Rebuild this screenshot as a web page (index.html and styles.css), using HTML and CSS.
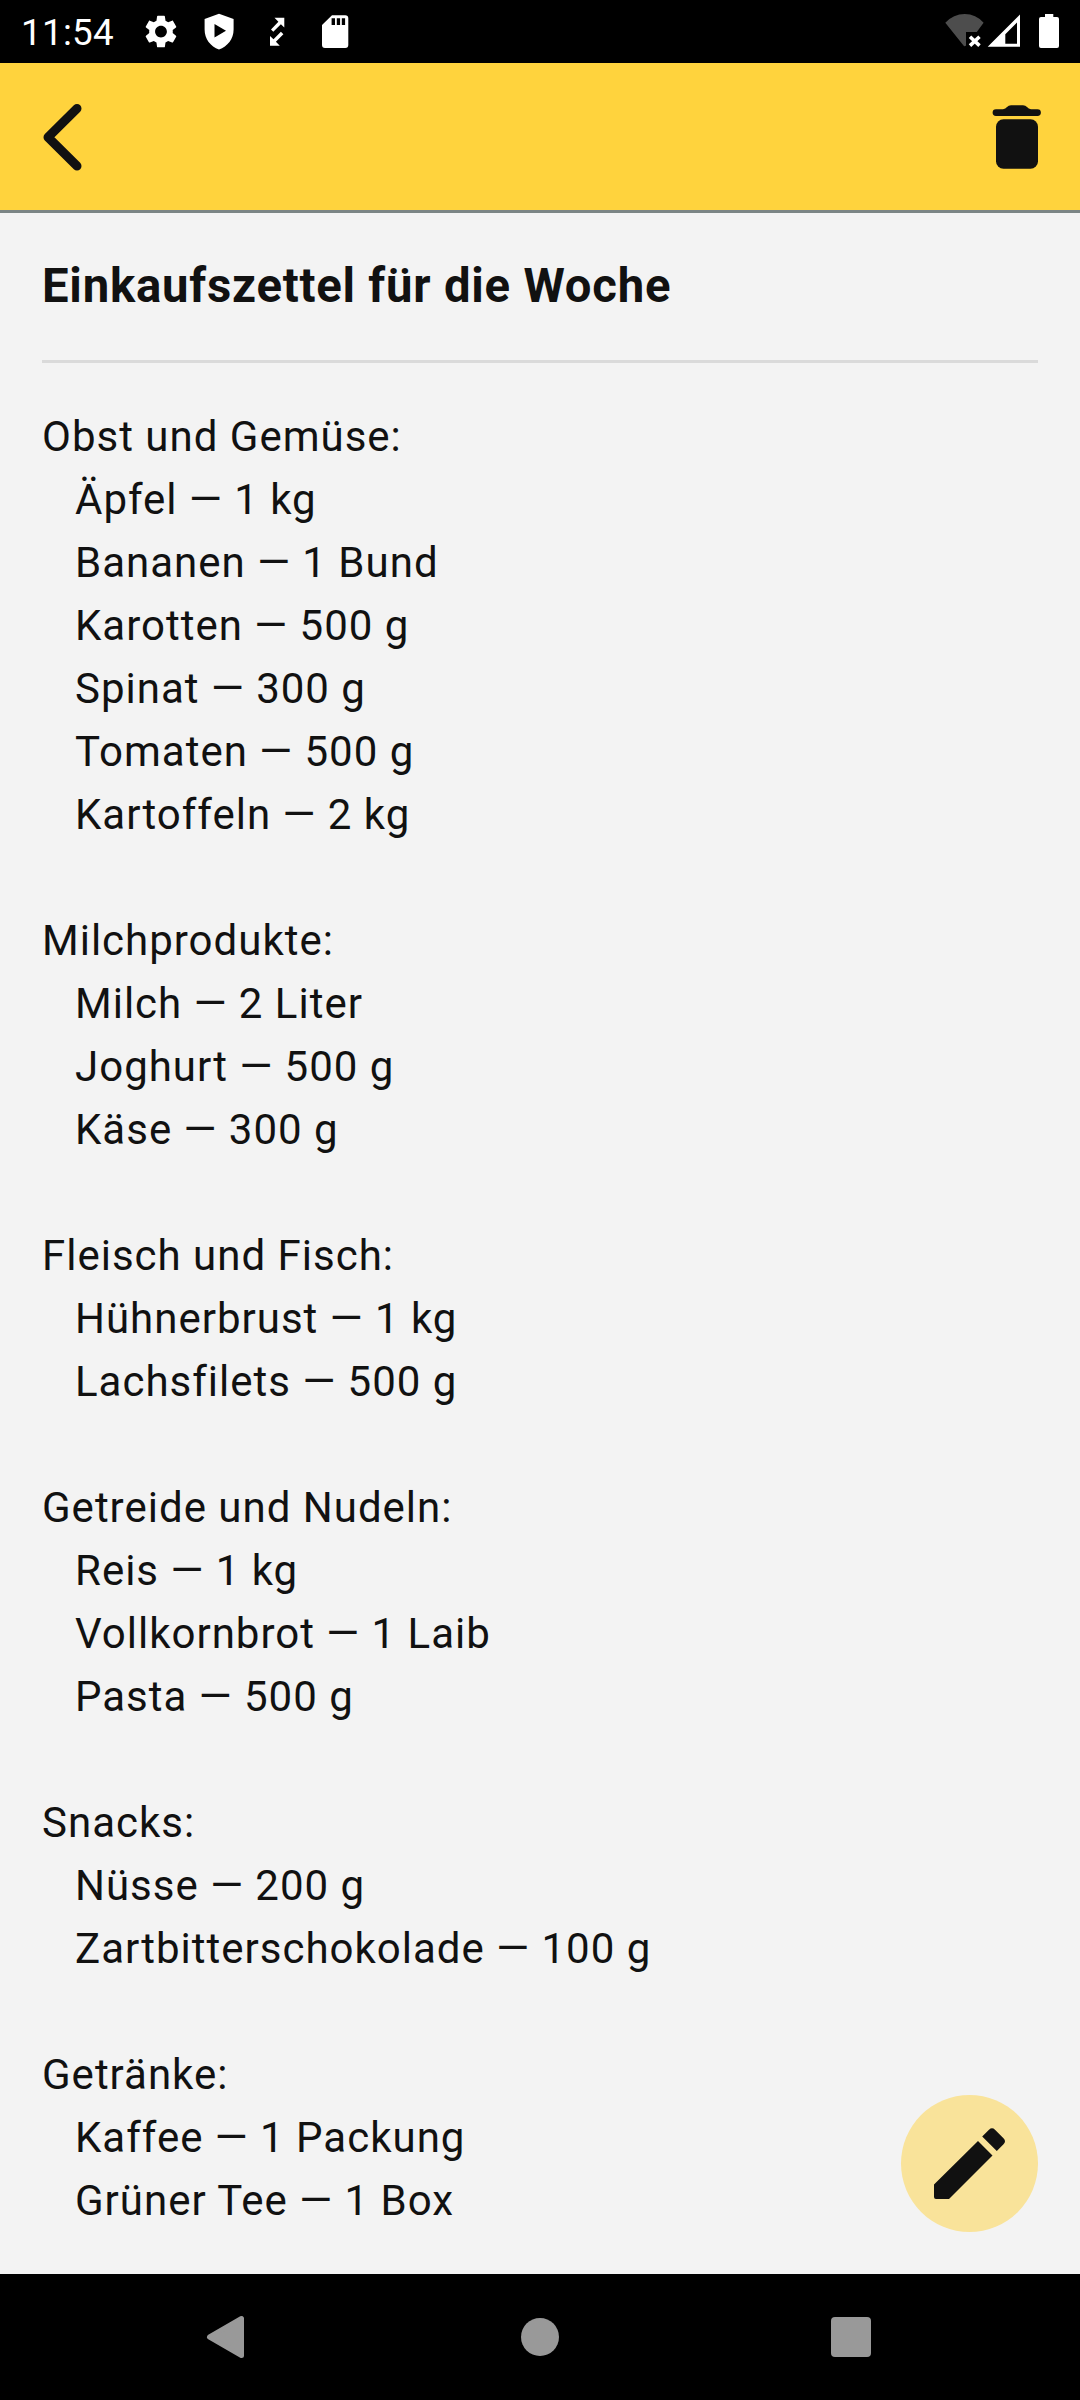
FILE: index.html
```html
<!DOCTYPE html>
<html lang="de">
<head>
<meta charset="utf-8">
<title>Einkaufszettel für die Woche</title>
<link rel="stylesheet" href="styles.css">
</head>
<body>
<div class="screen">
  <div class="status-bar">
    <span class="clock">11:54</span>
    <svg class="status-icons" viewBox="0 0 220 63">
      <g fill="#fff">
        <path transform="translate(11.300 11.900) scale(1.640)" d="M19.140 12.940c.04-.3.06-.61.06-.94 0-.32-.02-.64-.07-.94l2.030-1.580c.18-.14.23-.41.12-.61l-1.920-3.320c-.12-.22-.37-.29-.59-.22l-2.390.96c-.5-.38-1.030-.7-1.620-.94l-.36-2.540c-.04-.24-.24-.41-.48-.41h-3.840c-.24 0-.43.17-.47.41l-.36 2.540c-.59.24-1.130.57-1.620.94l-2.390-.96c-.22-.08-.47 0-.59.22L2.740 8.870c-.12.21-.08.47.12.61l2.030 1.580c-.05.3-.09.63-.09.94s.02.64.07.94l-2.030 1.580c-.18.14-.23.41-.12.61l1.920 3.320c.12.22.37.29.59.22l2.390-.96c.5.38 1.030.7 1.620.94l.36 2.540c.05.24.24.41.48.41h3.840c.24 0 .44-.17.47-.41l.36-2.540c.59-.24 1.130-.56 1.620-.94l2.390.96c.22.08.47 0 .59-.22l1.920-3.320c.12-.22.07-.47-.12-.61l-2.010-1.580zM12 15.600c-1.980 0-3.600-1.620-3.600-3.600s1.620-3.600 3.600-3.600 3.600 1.620 3.600 3.600-1.620 3.600-3.600 3.600z"/>
        <path fill-rule="evenodd" d="M89 13.700 103.600 19V29.500C103.600 39 97.500 46.500 89 49.500 80.500 46.500 74.600 39 74.600 29.500V19ZM84.500 24V37.500L96 30.700Z"/>
        <path d="M144.500 17.700H154.300V27.500L150.900 24.200 143.300 31.800 141 29.500 148.400 21.700ZM140 45.800V36L143.500 39.300 150.900 31.800 153.400 34.200 145.900 41.800 149.800 45.800Z"/>
        <path fill-rule="evenodd" d="M202 15.200H215.200Q218.300 15.200 218.300 18.300V45Q218.300 48 215.300 48H195Q192 48 192 45V25ZM201.600 18.300V25H205V18.300ZM206.800 18.300V25H210.100V18.300ZM211.800 18.300V25H215.100V18.300Z"/>
      </g>
    </svg>
    <svg class="signal-icons" viewBox="0 0 120 63">
      <path fill="#4d4d4d" d="M.3 22.700Q8.500 14 19.700 14T38.600 22.700L31.800 32H21V45.500Q19.500 47 18.500 45.500Z"/>
      <path d="M25 36.800 34.500 45.600M34.500 36.800 25 45.600" stroke="#fff" stroke-width="3.600"/>
      <path fill="#fff" fill-rule="evenodd" d="M42.700 46.800 75 14.500V46.800ZM72 22.500 60.300 34.200V43.700H72Z"/>
      <path fill="#fff" d="M100 14H108.300V17H112Q114 17 114 19V46Q114 48 112 48H96Q94 48 94 46V19Q94 17 96 17H100Z"/>
    </svg>
  </div>

  <header class="app-bar">
    <svg class="back" viewBox="0 0 42 70"><path d="M35 6.500 6 35.300 35 64" fill="none" stroke="#111" stroke-width="9" stroke-linecap="round" stroke-linejoin="round"/></svg>
    <svg class="trash" viewBox="0 0 50 64">
      <path fill="#111" d="M4 4.200H11Q13.500 4 15 2 16.500.300 19 .300H31Q33.500.300 35 2 36.500 4 39 4.200H45.500A3.400 3.400 0 0 1 45.500 11H4A3.400 3.400 0 0 1 4 4.200Z"/>
      <rect fill="#111" x="4" y="14.300" width="42" height="49.400" rx="7.500"/>
    </svg>
  </header>

  <main class="note">
    <h1 class="note-title">Einkaufszettel für die Woche</h1>
    <section class="group">
      <h2>Obst und Gemüse:</h2>
      <ul><li>Äpfel — 1 kg</li><li>Bananen — 1 Bund</li><li>Karotten — 500 g</li><li>Spinat — 300 g</li><li>Tomaten — 500 g</li><li>Kartoffeln — 2 kg</li></ul>
    </section>
    <section class="group">
      <h2>Milchprodukte:</h2>
      <ul><li>Milch — 2 Liter</li><li>Joghurt — 500 g</li><li>Käse — 300 g</li></ul>
    </section>
    <section class="group">
      <h2>Fleisch und Fisch:</h2>
      <ul><li>Hühnerbrust — 1 kg</li><li>Lachsfilets — 500 g</li></ul>
    </section>
    <section class="group">
      <h2>Getreide und Nudeln:</h2>
      <ul><li>Reis — 1 kg</li><li>Vollkornbrot — 1 Laib</li><li>Pasta — 500 g</li></ul>
    </section>
    <section class="group">
      <h2>Snacks:</h2>
      <ul><li>Nüsse — 200 g</li><li>Zartbitterschokolade — 100 g</li></ul>
    </section>
    <section class="group">
      <h2>Getränke:</h2>
      <ul><li>Kaffee — 1 Packung</li><li>Grüner Tee — 1 Box</li></ul>
    </section>
    <div class="fab">
      <svg viewBox="0 0 72 72"><path fill="#111" d="M0 56.500 44 13 58.500 27.500 15 71H2Q0 71 0 69ZM48.200 8.500 55 1.700Q58 -1.200 61 1.700L69.500 10.200Q72.500 13.200 69.500 16.200L62.800 23Z"/></svg>
    </div>
  </main>

  <nav class="nav-bar">
    <svg viewBox="0 0 60 60"><path d="M10.500 30 42.500 11.500V48.500Z" fill="#999" stroke="#999" stroke-width="5" stroke-linejoin="round"/></svg>
    <svg viewBox="0 0 60 60"><circle cx="30" cy="30" r="19" fill="#999"/></svg>
    <svg viewBox="0 0 60 60"><rect x="10" y="10" width="40" height="40" rx="4" fill="#999"/></svg>
  </nav>
</div>
</body>
</html>
```
FILE: styles.css
```css
* { box-sizing: border-box; }
body {
  margin: 0;
  font-family: Roboto, sans-serif;
  color: #111;
  background: #f3f3f3;
}
svg { display: block; flex: none; }
.screen {
  width: 1080px;
  height: 2400px;
  display: flex;
  flex-direction: column;
}
.status-bar {
  flex: none;
  height: 63px;
  padding-left: 21px;
  background: #000;
  color: #fff;
  display: flex;
}
.clock {
  width: 109px;
  font-size: 36.750px;
  line-height: 65px;
  letter-spacing: 0.300px;
}
.status-icons { width: 220px; height: 63px; }
.signal-icons { width: 120px; height: 63px; margin-left: 595px; }
.app-bar {
  flex: none;
  height: 150px;
  padding: 0 38px 0 42px;
  background: #ffd33d;
  border-bottom: 3px solid #7b8585;
  display: flex;
  justify-content: space-between;
}
.back { width: 42px; height: 70px; margin-top: 39px; }
.trash { width: 50px; height: 64px; margin-top: 42px; }
.note {
  flex: 1;
  min-height: 0;
  position: relative;
  padding: 42px 42px 0;
  background: #f3f3f3;
}
.note-title {
  height: 108px;
  margin: 0 0 42px;
  border-bottom: 3px solid #dadada;
  font-size: 47.250px;
  line-height: 62px;
  font-weight: 700;
  letter-spacing: 0.780px;
}
.group {
  margin-bottom: 63px;
  font-size: 42px;
  line-height: 63px;
  letter-spacing: 1px;
}
.group h2 { margin: 0; font: inherit; }
.group ul { margin: 0; padding: 0 0 0 33px; list-style: none; }
.fab {
  position: absolute;
  right: 42px;
  bottom: 42px;
  width: 137px;
  height: 137px;
  border-radius: 50%;
  background: #f9e39a;
  display: flex;
  align-items: center;
  justify-content: center;
}
.fab svg { width: 72px; height: 72px; }
.nav-bar {
  flex: none;
  height: 126px;
  padding: 0 199px;
  background: #000;
  display: flex;
  align-items: center;
  justify-content: space-between;
}
.nav-bar svg { width: 60px; height: 60px; }
```
